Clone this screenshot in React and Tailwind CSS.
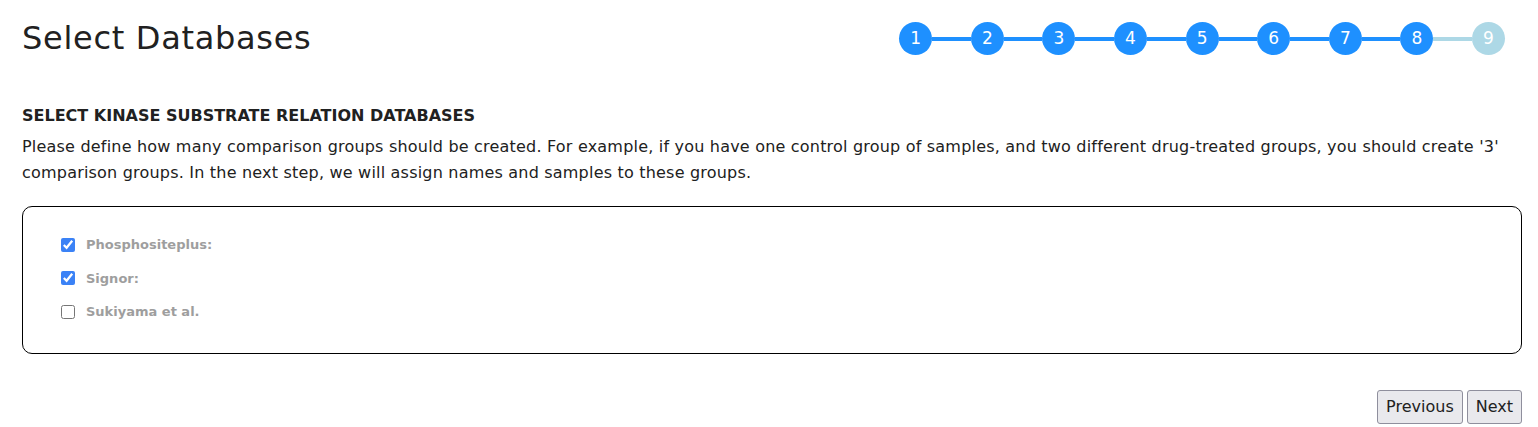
import { useState } from 'react';

const steps = [1, 2, 3, 4, 5, 6, 7, 8, 9];
const current = 8;

function Stepper() {
  return (
    <div className="flex items-center mr-[17px]">
      {steps.map((s, i) => (
        <div key={s} className="flex items-center">
          {i > 0 && (
            <div className={`w-[38.6px] h-[4px] ${s <= current ? 'bg-[#1e90ff]' : 'bg-[#add8e6]'}`} />
          )}
          <div
            className={`w-[33px] h-[33px] rounded-full flex items-center justify-center text-white text-[17px] ${s <= current ? 'bg-[#1e90ff]' : 'bg-[#add8e6]'}`}
          >
            {s}
          </div>
        </div>
      ))}
    </div>
  );
}

export default function App() {
  const [dbs, setDbs] = useState([
    { id: 'psp', label: 'Phosphositeplus:', checked: true },
    { id: 'signor', label: 'Signor:', checked: true },
    { id: 'suki', label: 'Sukiyama et al.', checked: false },
  ]);

  const toggle = (id) => {
    setDbs(dbs.map(d => d.id === id ? { ...d, checked: !d.checked } : d));
  };

  return (
    <div className="min-h-screen bg-white text-[#212121] pl-[22px] pr-[16px] pt-[16px]" style={{ fontFamily: '"DejaVu Sans", sans-serif' }}>
      <div className="flex justify-between items-start">
        <h1 className="text-[32px] leading-[44px] font-normal tracking-[0.7px]">Select Databases</h1>
        <div className="pt-[6px]">
          <Stepper />
        </div>
      </div>

      <h2 className="mt-[44px] text-[16px] font-bold">SELECT KINASE SUBSTRATE RELATION DATABASES</h2>
      <p className="mt-[6px] text-[16px] leading-[26px] tracking-[0.2px]">
        Please define how many comparison groups should be created. For example, if you have one control group of samples, and two different drug-treated groups, you should create '3' comparison groups. In the next step, we will assign names and samples to these groups.
      </p>

      <div className="mt-[20px] border border-black rounded-[10px] pl-[38px] pt-[28px] pb-[31px] flex flex-col gap-[14px]">
        {dbs.map(d => (
          <label key={d.id} className="flex items-center gap-[11px] text-[13px] font-bold text-[#9e9e9e] cursor-pointer">
            <input
              type="checkbox"
              checked={d.checked}
              onChange={() => toggle(d.id)}
              className="w-[14px] h-[14px] accent-[#3b82f6]"
            />
            {d.label}
          </label>
        ))}
      </div>

      <div className="flex justify-end gap-[4px] mt-[36px]">
        <button className="px-[8px] py-[4px] text-[16px] bg-[#e9e9ed] border border-[#8f8f9d] rounded-[3px]">Previous</button>
        <button className="px-[8px] py-[4px] text-[16px] bg-[#e9e9ed] border border-[#8f8f9d] rounded-[3px]">Next</button>
      </div>
    </div>
  );
}
